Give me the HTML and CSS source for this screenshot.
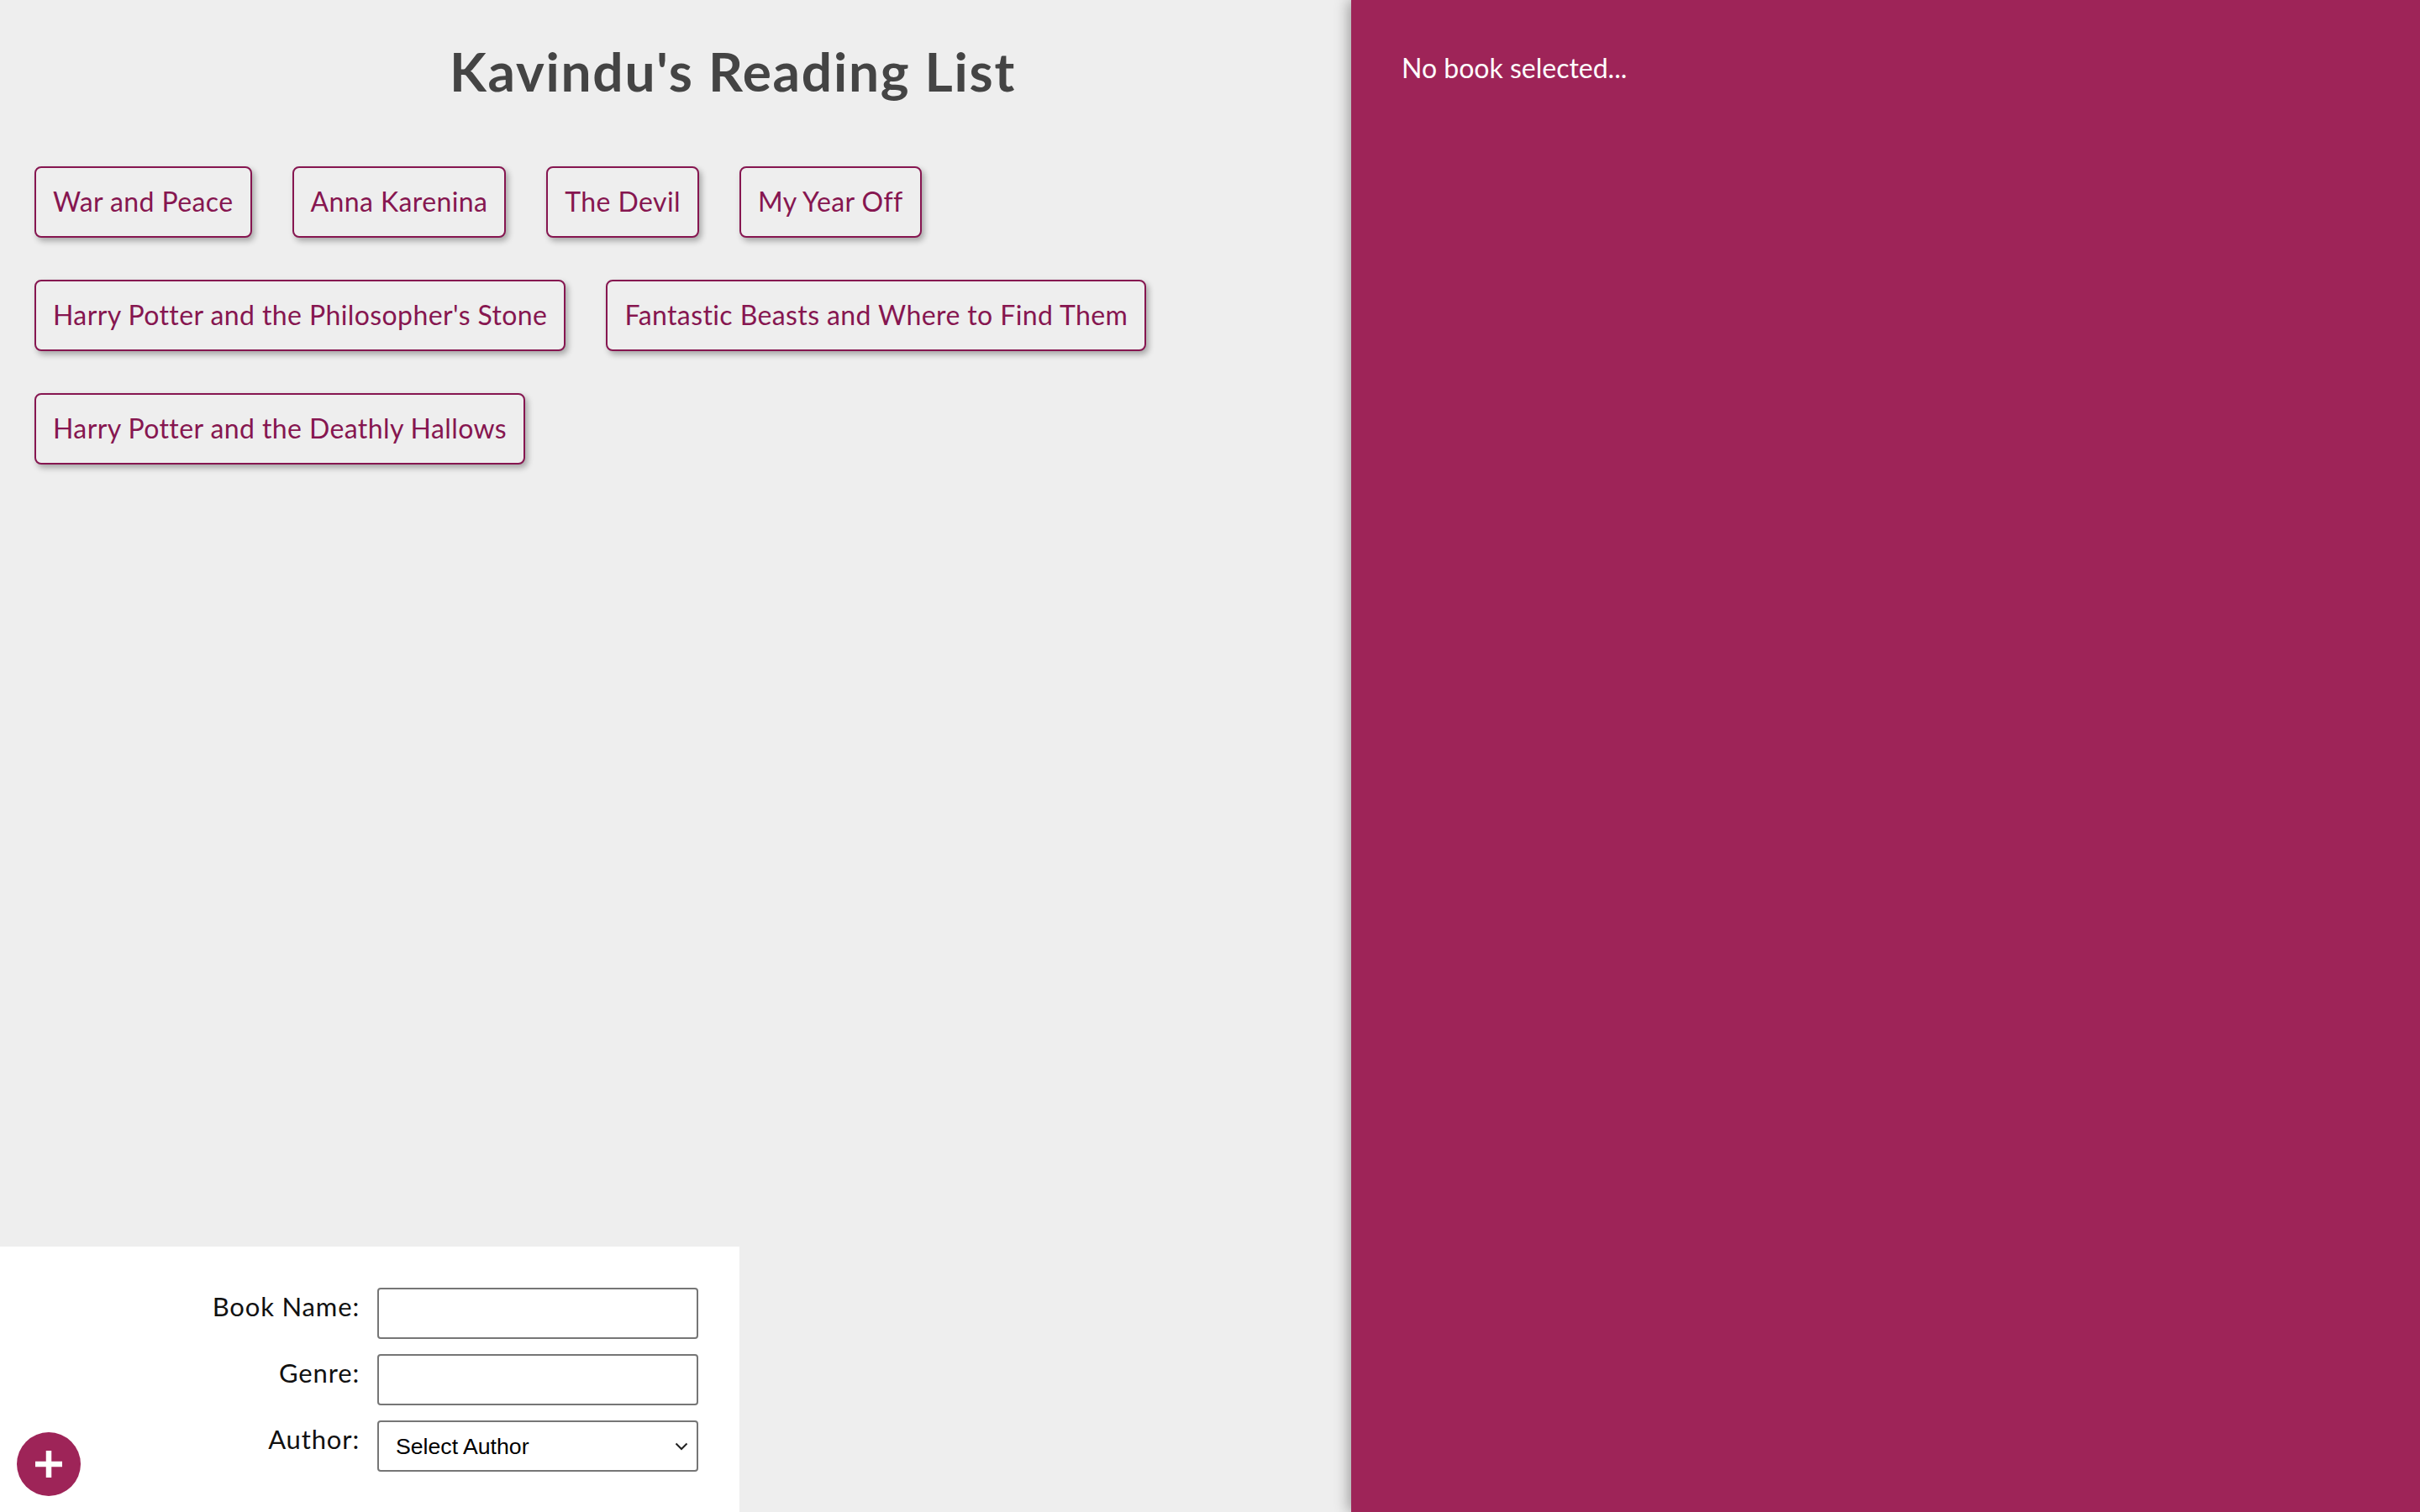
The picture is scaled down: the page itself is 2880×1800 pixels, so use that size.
FILE: index.html
```html
<!DOCTYPE html>
<html lang="en">
<head>
<meta charset="utf-8">
<title>Kavindu's Reading List</title>
<link rel="stylesheet" href="styles.css">
</head>
<body>
<div class="app">
  <div class="main">
    <h1 class="title">Kavindu's Reading List</h1>
    <ul class="book-list">
      <li class="book">War and Peace</li>
      <li class="book">Anna Karenina</li>
      <li class="book">The Devil</li>
      <li class="book">My Year Off</li>
      <li class="book">Harry Potter and the Philosopher's Stone</li>
      <li class="book">Fantastic Beasts and Where to Find Them</li>
      <li class="book">Harry Potter and the Deathly Hallows</li>
    </ul>
    <form class="add-book">
      <label class="field-label" for="name">Book Name:</label>
      <input class="field-input" id="name" type="text">
      <label class="field-label" for="genre">Genre:</label>
      <input class="field-input" id="genre" type="text">
      <label class="field-label" for="author">Author:</label>
      <div class="select-wrap">
        <select class="field-input field-select" id="author">
          <option>Select Author</option>
        </select>
        <svg class="chevron" width="16" height="10" viewBox="0 0 16 10"><path d="M1.5 1.5 L8 8 L14.5 1.5" fill="none" stroke="#222" stroke-width="2"/></svg>
      </div>
      <button class="add-btn" type="button" aria-label="Add book">
        <svg width="76" height="76" viewBox="0 0 76 76"><circle cx="38" cy="38" r="38" fill="#9e2458"/><path d="M38 22 V54 M22 38 H54" stroke="#fff" stroke-width="6.5"/></svg>
      </button>
    </form>
  </div>
  <aside class="details">
    <p class="details-empty">No book selected...</p>
  </aside>
</div>
</body>
</html>
```
FILE: styles.css
```css
* { box-sizing: border-box; }
html, body { margin: 0; padding: 0; }
body {
  background: #eeeeee;
  font-family: Lato, "Noto Sans", sans-serif;
  width: 2880px;
  height: 1800px;
  overflow: hidden;
}
.app {
  display: flex;
  height: 1800px;
}
.main {
  flex: 1;
  min-width: 0;
  display: flex;
  flex-direction: column;
}
.title {
  margin: 0;
  padding: 46px 0 0 136px;
  text-align: center;
  font-size: 64px;
  line-height: 77px;
  font-weight: 700;
  letter-spacing: 1.75px;
  color: #444444;
}
.book-list {
  list-style: none;
  margin: 75px 0 0 0;
  padding: 0 40px 0 41px;
  display: flex;
  flex-wrap: wrap;
  gap: 50px 48px;
}
.book {
  border: 2px solid #861650;
  border-radius: 8px;
  padding: 19px 20px 21px;
  font-size: 32px;
  line-height: 41px;
  letter-spacing: 0.4px;
  color: #861650;
  box-shadow: 3px 4px 7px rgba(0,0,0,0.3);
  background: #eeeeee;
}
.add-book {
  margin-top: auto;
  width: 880px;
  height: 316px;
  background: #ffffff;
  position: relative;
  padding: 49px 0 0 0;
  display: grid;
  grid-template-columns: 428px 382px;
  grid-auto-rows: 61px;
  column-gap: 21px;
  row-gap: 18px;
  align-content: start;
}
.field-label {
  text-align: right;
  font-size: 31px;
  line-height: 36px;
  padding-top: 4px;
  letter-spacing: 0.85px;
  color: #111111;
}
.field-input {
  width: 382px;
  height: 61px;
  border: 2px solid #767676;
  border-radius: 4px;
  background: #ffffff;
  margin: 0;
}
.select-wrap {
  position: relative;
  width: 382px;
  height: 61px;
}
.field-select {
  appearance: none;
  -webkit-appearance: none;
  font-family: "Liberation Sans", Arial, sans-serif;
  font-size: 26.67px;
  color: #000;
  padding: 0 0 0 20px;
}
.chevron {
  position: absolute;
  right: 12px;
  top: 26px;
  pointer-events: none;
}
.add-btn {
  position: absolute;
  left: 20px;
  bottom: 19px;
  width: 76px;
  height: 76px;
  padding: 0;
  border: 0;
  background: none;
  display: block;
}
.add-btn svg { display: block; }
.details {
  width: 1272px;
  flex: none;
  background: #9e2458;
  padding: 62px 60px 60px;
  box-shadow: -3px 0 16px rgba(0,0,0,0.35);
  position: relative;
}
.details-empty {
  margin: 0;
  font-size: 32px;
  line-height: 38px;
  color: #ffffff;
}
```
